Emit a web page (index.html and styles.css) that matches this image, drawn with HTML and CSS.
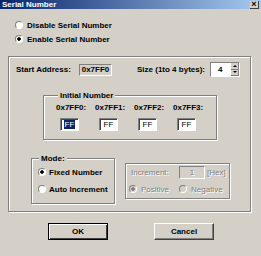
FILE: index.html
```html
<!DOCTYPE html>
<html lang="en">
<head>
  <meta charset="UTF-8" />
  <meta name="viewport" content="width=device-width, initial-scale=1.0"/>
  <title>Serial Number</title>
  <link rel="stylesheet" href="styles.css">
</head>
<body>
  <div class="titlebar">
    <span class="title">Serial Number</span>
    <span class="close">&#215;</span>
  </div>

  <div class="radio-list">
    <label class="radio"><span class="dot"></span>Disable Serial Number</label>
    <label class="radio"><span class="dot checked"></span>Enable Serial Number</label>
  </div>

  <div class="group main">
    <div class="addr-row">
      <span class="addr-label">Start Address:</span>
      <span class="static">0x7FF0</span>
      <span class="size-label">Size (1to 4 bytes):</span>
      <span class="spin">
        <span class="spin-value">4</span>
        <span class="spin-arrows">
          <span class="arrow up"></span>
          <span class="arrow down"></span>
        </span>
      </span>
    </div>

    <fieldset class="group initial">
      <legend>Initial Number</legend>
      <div class="bytes">
        <div class="byte">
          <span>0x7FF0:</span>
          <span class="edit"><span class="selected">FF</span></span>
        </div>
        <div class="byte">
          <span>0x7FF1:</span>
          <span class="edit">FF</span>
        </div>
        <div class="byte">
          <span>0x7FF2:</span>
          <span class="edit">FF</span>
        </div>
        <div class="byte">
          <span>0x7FF3:</span>
          <span class="edit">FF</span>
        </div>
      </div>
    </fieldset>

    <div class="mode-row">
      <fieldset class="group mode">
        <legend>Mode:</legend>
        <label class="radio"><span class="dot checked"></span>Fixed Number</label>
        <label class="radio"><span class="dot"></span>Auto Increment</label>
      </fieldset>

      <div class="group increment">
        <div class="inc-row">
          <span class="inc-label">Increment:</span>
          <span class="edit disabled-edit">1</span>
          <span class="hex">[Hex]</span>
        </div>
        <div class="inc-row">
          <label class="radio"><span class="dot checked"></span>Positive</label>
          <label class="radio negative"><span class="dot"></span>Negative</label>
        </div>
      </div>
    </div>
  </div>

  <div class="buttons">
    <button class="btn default">OK</button>
    <button class="btn">Cancel</button>
  </div>
</body>
</html>
```

FILE: styles.css
```css
body {
  margin: 0;
  background: #d4d0c8;
  font-family: "Liberation Sans", Arial, sans-serif;
  font-size: 8px;
  font-weight: bold;
  color: #000;
  line-height: 9px;
}

.titlebar {
  height: 9px;
  display: flex;
  align-items: center;
  justify-content: space-between;
  background: linear-gradient(to right, #0a246a, #a6caf0);
}

.title {
  color: #fff;
  padding-left: 2px;
}

.close {
  width: 9px;
  height: 8px;
  margin-right: 2px;
  background: #d4d0c8;
  border-right: 1px solid #404040;
  border-bottom: 1px solid #404040;
  box-sizing: border-box;
  font-size: 9px;
  line-height: 7px;
  text-align: center;
  color: #000;
}

/* radios */
.radio {
  display: flex;
  align-items: center;
  height: 14px;
  white-space: nowrap;
}

.dot {
  width: 6px;
  height: 6px;
  border-radius: 50%;
  border: 1px solid #808080;
  border-bottom-color: #fff;
  border-right-color: #fff;
  background: #fff;
  margin-right: 3px;
  flex-shrink: 0;
}

.dot.checked {
  background: radial-gradient(circle, #000 0 1.5px, #fff 2px);
}

.radio-list {
  margin: 9px 0 10px 15px;
}

.radio-list .dot {
  margin-right: 4px;
}

/* group boxes */
.group {
  border: 1px solid #808080;
  box-shadow: inset 1px 1px 0 #fff, 1px 1px 0 #fff;
  box-sizing: border-box;
}

fieldset.group {
  margin: 0;
  padding: 0;
  min-width: 0;
}

legend {
  padding: 0 2px;
  margin-left: 1px;
  line-height: 9px;
  background: #d4d0c8;
}

.main {
  margin-left: 8px;
  width: 243px;
  height: 156px;
}

.addr-row {
  display: flex;
  align-items: center;
  height: 15px;
  margin: 5px 0 0 7px;
}

.addr-label {
  width: 63px;
}

.static {
  width: 33px;
  height: 12px;
  box-sizing: border-box;
  border: 1px solid #808080;
  border-right-color: #fff;
  border-bottom-color: #fff;
  text-align: center;
  line-height: 10px;
}

.size-label {
  margin-left: 25px;
  width: 73px;
}

.spin {
  display: flex;
  width: 30px;
  height: 15px;
  box-sizing: border-box;
  border: 1px solid #808080;
  border-right-color: #fff;
  border-bottom-color: #fff;
  background: #fff;
}

.spin-value {
  flex: 1;
  line-height: 13px;
  padding-left: 7px;
}

.spin-arrows {
  width: 8px;
  display: flex;
  flex-direction: column;
}

.arrow {
  flex: 1;
  background: #d4d0c8;
  border-right: 1px solid #808080;
  border-bottom: 1px solid #808080;
  box-sizing: border-box;
  display: flex;
  align-items: center;
  justify-content: center;
}

.arrow::after {
  content: "";
  border-left: 2px solid transparent;
  border-right: 2px solid transparent;
}

.arrow.up::after {
  border-bottom: 2px solid #000;
}

.arrow.down::after {
  border-top: 2px solid #000;
}

/* initial number */
fieldset.initial {
  margin: 14px 0 0 34px;
  width: 174px;
  padding: 3px 0 8px 12px;
}

.initial legend {
  margin-left: 2px;
}

.bytes {
  display: grid;
  grid-template-columns: repeat(4, 39px);
}

.byte {
  display: flex;
  flex-direction: column;
  gap: 6px;
}

.edit {
  display: flex;
  align-items: center;
  justify-content: center;
  width: 19px;
  height: 13px;
  margin-left: 4px;
  box-sizing: border-box;
  border: 1px solid #808080;
  border-right-color: #fff;
  border-bottom-color: #fff;
  box-shadow: inset 1px 1px 0 #404040;
  background: #fff;
  font-weight: normal;
}

.selected {
  background: #0a246a;
  color: #fff;
  padding: 0 1px;
}

/* mode and increment */
.mode-row {
  display: flex;
  align-items: flex-start;
  margin: 14px 0 0 22px;
}

fieldset.mode {
  width: 84px;
  height: 50px;
  padding: 2px 0 0 6px;
}

.mode .radio + .radio {
  margin-top: 3px;
}

.increment {
  width: 105px;
  height: 36px;
  margin: 9px 0 0 10px;
  padding: 2px 0 0 3px;
  color: #808080;
  text-shadow: 1px 1px 0 #fff;
}

.inc-row {
  display: flex;
  align-items: center;
  height: 13px;
}

.inc-row + .inc-row {
  margin-top: 3px;
  height: 14px;
}

.inc-label {
  width: 48px;
  padding-left: 2px;
  font-weight: normal;
}

.disabled-edit {
  width: 26px;
  margin-left: 0;
  background: #d4d0c8;
  box-shadow: none;
}

.hex {
  margin-left: 2px;
  font-weight: normal;
}

.increment .radio {
  font-weight: normal;
}

.increment .dot {
  background: #d4d0c8;
  margin-right: 4px;
}

.increment .dot.checked {
  background: radial-gradient(circle, #808080 0 1.5px, #d4d0c8 2px);
}

.negative {
  margin-left: 10px;
}

/* buttons */
.buttons {
  display: flex;
  gap: 46px;
  margin: 11px 0 0 48px;
}

.btn {
  width: 60px;
  height: 17px;
  padding: 0;
  font: inherit;
  color: #000;
  background: #d4d0c8;
  border: 1px solid;
  border-color: #fff #404040 #404040 #fff;
  box-shadow: inset -1px -1px 0 #808080;
}

.btn.default {
  border-color: #000;
  box-shadow: inset 1px 1px 0 #fff, inset -1px -1px 0 #404040;
}
```
